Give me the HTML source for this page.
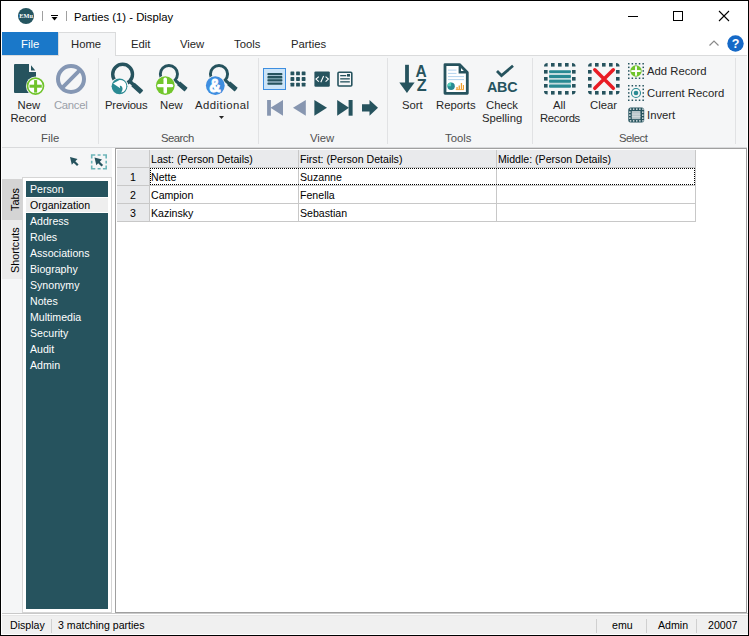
<!DOCTYPE html>
<html><head><meta charset="utf-8">
<style>
*{margin:0;padding:0;box-sizing:border-box}
html,body{width:749px;height:636px;overflow:hidden;background:#fff}
body{position:relative;font-family:"Liberation Sans",sans-serif;color:#1e1e1e}
.a{position:absolute}
.t{position:absolute;white-space:nowrap;line-height:1}
.rb{font-size:11.3px;color:#262626}
.gl{font-size:11.3px;color:#505050}
.tb{font-size:10.6px;color:#000}
svg{position:absolute;overflow:visible}
</style></head><body>
<!-- window border -->
<div class="a" style="left:0;top:0;width:749px;height:636px;border:1px solid #000;z-index:50;pointer-events:none"></div>

<!-- title bar -->
<svg style="left:18px;top:8px" width="16" height="16" viewBox="0 0 16 16"><circle cx="8" cy="8" r="8" fill="#255560"/><text x="1.3" y="10.4" font-family="Liberation Serif" font-size="7" font-weight="bold" fill="#fff" textLength="13.6" lengthAdjust="spacingAndGlyphs">EMu</text></svg>
<div class="a" style="left:42px;top:11px;width:1px;height:10px;background:#a0a0a0"></div>
<div class="a" style="left:51px;top:15px;width:7px;height:1px;background:#000"></div>
<svg style="left:51px;top:17px" width="7" height="4"><path d="M0.5 0 L6.5 0 L3.5 3.5 Z" fill="#000"/></svg>
<div class="a" style="left:66px;top:11px;width:1px;height:10px;background:#a0a0a0"></div>
<div class="t rb" style="left:74px;top:12px;color:#000">Parties (1) - Display</div>
<!-- window controls -->
<div class="a" style="left:628px;top:16px;width:10px;height:1px;background:#000"></div>
<div class="a" style="left:673px;top:11px;width:10px;height:10px;border:1px solid #000"></div>
<svg style="left:719px;top:11px" width="10" height="10"><path d="M0 0 L10 10 M10 0 L0 10" stroke="#000" stroke-width="1.1"/></svg>

<!-- tab row -->
<div class="a" style="left:2px;top:55px;width:745px;height:1px;background:#dadbdc"></div>
<div class="a" style="left:2px;top:32px;width:56px;height:23px;background:#1a78c9"></div>
<div class="t rb" style="left:21px;top:39px;color:#fff">File</div>
<div class="a" style="left:58px;top:32px;width:58px;height:24px;background:#f5f6f7;border:1px solid #dadbdc;border-bottom:none"></div>
<div class="t rb" style="left:71px;top:39px">Home</div>
<div class="t rb" style="left:131px;top:39px">Edit</div>
<div class="t rb" style="left:180px;top:39px">View</div>
<div class="t rb" style="left:234px;top:39px">Tools</div>
<div class="t rb" style="left:291px;top:39px">Parties</div>
<svg style="left:709px;top:40px" width="10" height="6"><path d="M0.5 5.5 L5 1 L9.5 5.5" fill="none" stroke="#8a8a8a" stroke-width="1.2"/></svg>
<svg style="left:727px;top:35px" width="17" height="17" viewBox="0 0 17 17"><circle cx="8.5" cy="8.5" r="8.2" fill="#1569c7"/><text x="8.5" y="13.2" font-family="Liberation Sans" font-weight="bold" font-size="12.5" fill="#fff" text-anchor="middle">?</text></svg>

<!-- ribbon -->
<div class="a" style="left:2px;top:56px;width:745px;height:91px;background:#f5f6f7"></div>
<div class="a" style="left:2px;top:147px;width:745px;height:1px;background:#d9dadc"></div>


<!-- group separators -->
<div class="a" style="left:98px;top:58px;width:1px;height:86px;background:#e1e2e4"></div>
<div class="a" style="left:258px;top:58px;width:1px;height:86px;background:#e1e2e4"></div>
<div class="a" style="left:387px;top:58px;width:1px;height:86px;background:#e1e2e4"></div>
<div class="a" style="left:532px;top:58px;width:1px;height:86px;background:#e1e2e4"></div>
<div class="a" style="left:735px;top:58px;width:1px;height:86px;background:#e1e2e4"></div>

<!-- File group -->
<svg style="left:0;top:0" width="1" height="1">
 <path d="M15 64 L29 64 L29 72 L36 72 L36 92 Q36 93 35 93 L15 93 Q14 93 14 92 L14 65 Q14 64 15 64 Z" fill="#26535e"/>
 <path d="M31 65.3 L31 70.4 L35.3 70.4 Z" fill="#26535e"/>
 <circle cx="35.5" cy="86.1" r="9.6" fill="#f5f6f7"/>
 <circle cx="35.5" cy="86.1" r="8" fill="#fff" stroke="#70c42c" stroke-width="1.7"/>
 <rect x="29.5" y="84.7" width="12.3" height="3" fill="#70c42c"/>
 <rect x="34.1" y="80.1" width="3" height="12.5" fill="#70c42c"/>
 <circle cx="71" cy="79" r="13" fill="none" stroke="#8597b4" stroke-width="4"/>
 <path d="M80.3 69.7 L61.7 88.3" stroke="#8597b4" stroke-width="3.8"/>
</svg>
<div class="t rb" style="left:17.5px;top:100px">New</div>
<div class="t rb" style="left:10.5px;top:113px;letter-spacing:-0.15px">Record</div>
<div class="t rb" style="left:54px;top:100px;color:#9aa0a8;letter-spacing:-0.3px">Cancel</div>
<div class="t gl" style="left:41px;top:133px">File</div>

<!-- Search group -->
<svg style="left:0;top:0" width="1" height="1">
 <circle cx="122.6" cy="74.2" r="9.9" fill="none" stroke="#26535e" stroke-width="3.4"/>
 <path d="M129.5 81 L141.5 92.2" stroke="#26535e" stroke-width="3.6"/>
 <path d="M133 84.5 L141.5 92.2" stroke="#26535e" stroke-width="5"/>
 <circle cx="119.5" cy="86.3" r="8.9" fill="#f5f6f7"/>
 <circle cx="119.5" cy="86.3" r="7.9" fill="#2a8a93"/>
 <path d="M113.1 83.4 L119.5 79.9 A6.4 6.4 0 0 1 121 92.6 Q123.3 89.5 122.2 87.2 Q121.2 85.5 119.8 85.8 L120.2 88.3 Z" fill="#fff"/>
 <circle cx="168.9" cy="74.1" r="8.6" fill="none" stroke="#26535e" stroke-width="2.9"/>
 <path d="M174.5 79.8 L186 89.6" stroke="#26535e" stroke-width="3.2"/>
 <path d="M178.6 83.2 L186 89.6" stroke="#26535e" stroke-width="4.8"/>
 <circle cx="165.3" cy="85.6" r="10.2" fill="#f5f6f7"/>
 <circle cx="165.3" cy="85.6" r="9.4" fill="#72c62c"/>
 <rect x="157.1" y="84" width="16.2" height="3.3" rx="1.6" fill="#fff"/>
 <rect x="163.5" y="77.6" width="3.5" height="15.9" rx="1.6" fill="#fff"/>
 <circle cx="219" cy="74.1" r="8.6" fill="none" stroke="#26535e" stroke-width="2.9"/>
 <path d="M224.6 79.8 L236.1 89.6" stroke="#26535e" stroke-width="3.2"/>
 <path d="M228.7 83.2 L236.1 89.6" stroke="#26535e" stroke-width="4.8"/>
 <circle cx="215.3" cy="85.6" r="10.2" fill="#f5f6f7"/>
 <circle cx="215.3" cy="85.6" r="9.4" fill="#3f8ee0"/>
 <text x="209.3" y="91.8" font-family="Liberation Sans" font-weight="bold" font-size="18.5" fill="#fff" stroke="#fff" stroke-width="1" textLength="11.4" lengthAdjust="spacingAndGlyphs">&amp;</text>
 <path d="M219 116 L224 116 L221.5 119 Z" fill="#262626"/>
</svg>
<div class="t rb" style="left:105px;top:100px;letter-spacing:-0.2px">Previous</div>
<div class="t rb" style="left:160px;top:100px">New</div>
<div class="t rb" style="left:195px;top:100px;letter-spacing:0.5px">Additional</div>
<div class="t gl" style="left:161px;top:133px;letter-spacing:-0.5px">Search</div>

<!-- View group -->
<div class="a" style="left:263px;top:68px;width:23px;height:22px;background:#cce4f7;border:1px solid #3d8ee0"></div>
<svg style="left:0;top:0" width="1" height="1">
 <rect x="267.4" y="72.9" width="15" height="2.3" rx="0.8" fill="#26535e"/>
 <rect x="267.4" y="76.1" width="15" height="2.3" rx="0.8" fill="#26535e"/>
 <rect x="267.4" y="78.4" width="15" height="1" fill="#6c9aa3"/>
 <rect x="267.4" y="79.3" width="15" height="2.3" rx="0.8" fill="#26535e"/>
 <rect x="267.4" y="82.5" width="15" height="2.3" rx="0.8" fill="#26535e"/>
 <g fill="#26535e"><rect x="290.5" y="71.5" width="3.8" height="3.8" rx="0.6"/><rect x="296.1" y="71.5" width="3.8" height="3.8" rx="0.6"/><rect x="301.7" y="71.5" width="3.8" height="3.8" rx="0.6"/><rect x="290.5" y="77.1" width="3.8" height="3.8" rx="0.6"/><rect x="296.1" y="77.1" width="3.8" height="3.8" rx="0.6"/><rect x="301.7" y="77.1" width="3.8" height="3.8" rx="0.6"/><rect x="290.5" y="82.7" width="3.8" height="3.8" rx="0.6"/><rect x="296.1" y="82.7" width="3.8" height="3.8" rx="0.6"/><rect x="301.7" y="82.7" width="3.8" height="3.8" rx="0.6"/></g>
 <rect x="314.4" y="71.4" width="15.4" height="15.4" rx="1.2" fill="#26535e"/>
 <path d="M318.8 76.6 L316 79.1 L318.8 81.6 M325.6 76.6 L328.4 79.1 L325.6 81.6 M323.6 76 L320.8 82.2" fill="none" stroke="#fff" stroke-width="1.1"/>
 <rect x="338" y="72.2" width="13.8" height="13.8" rx="1" fill="none" stroke="#26535e" stroke-width="1.6"/>
 <rect x="340.2" y="75" width="6" height="1.3" fill="#26535e"/>
 <rect x="340.2" y="78.2" width="9.6" height="1.3" fill="#26535e"/>
 <rect x="340.2" y="81.2" width="9.6" height="1.3" fill="#26535e"/>
 <rect x="347" y="74" width="3" height="2.6" fill="#26535e"/>
 <rect x="267.1" y="100" width="3.8" height="15.7" fill="#8796b0"/>
 <path d="M283 100 L283 115.7 L270.5 107.85 Z" fill="#8796b0"/>
 <path d="M305.8 100 L305.8 115.7 L293 107.85 Z" fill="#8796b0"/>
 <path d="M314.4 100 L314.4 115.7 L327 107.85 Z" fill="#26535e"/>
 <path d="M337.2 100 L337.2 115.7 L349 107.85 Z" fill="#26535e"/>
 <rect x="348.6" y="100" width="4" height="15.7" fill="#26535e"/>
 <path d="M362 104.3 L369.5 104.3 L369.5 100 L378 107.85 L369.5 115.7 L369.5 111.4 L362 111.4 Z" fill="#26535e"/>
</svg>
<div class="t gl" style="left:310px;top:133px">View</div>

<!-- Tools group -->
<svg style="left:0;top:0" width="1" height="1">
 <rect x="405.1" y="64.8" width="3.8" height="18.5" fill="#26535e"/>
 <path d="M399.3 82.4 L414.6 82.4 L406.95 93.1 Z" fill="#26535e"/>
 <text x="415.6" y="76.6" font-family="Liberation Sans" font-weight="bold" font-size="16.6" fill="#26535e" textLength="11.2" lengthAdjust="spacingAndGlyphs">A</text>
 <text x="416.7" y="91" font-family="Liberation Sans" font-weight="bold" font-size="16.6" fill="#26535e" textLength="9.9" lengthAdjust="spacingAndGlyphs">Z</text>
 <path d="M445 64.6 L459.5 64.6 L467.3 72.4 L467.3 93.3 L445 93.3 Z" fill="#fff" stroke="#26535e" stroke-width="2.8" stroke-linejoin="round"/>
 <path d="M459.8 64.6 L459.8 72.2 L467.3 72.2" fill="none" stroke="#26535e" stroke-width="2.4"/>
 <rect x="448" y="69.6" width="8.5" height="1" fill="#b3d3ee"/>
 <rect x="448" y="72.9" width="8.5" height="1" fill="#b3d3ee"/>
 <rect x="448" y="76.1" width="16" height="1" fill="#b3d3ee"/>
 <rect x="448" y="79.1" width="16" height="1" fill="#b3d3ee"/>
 <circle cx="451.1" cy="86.2" r="3.7" fill="#2a8a93"/>
 <path d="M451.1 86.2 L451.1 82.5 A3.7 3.7 0 0 0 447.4 86.2 Z" fill="#52d0b8"/>
 <rect x="456.4" y="87" width="1.3" height="2.4" fill="#f0a030"/>
 <rect x="458.6" y="85.5" width="1.3" height="3.9" fill="#f0a030"/>
 <rect x="460.8" y="83" width="1.3" height="6.4" fill="#f0a030"/>
 <rect x="462.9" y="85" width="1.1" height="4.4" fill="#f0a030"/>
 <rect x="455.8" y="89.2" width="8.2" height="0.9" fill="#f0a030"/>
 <path d="M497 71 L501.5 75.5 L513 65.8" fill="none" stroke="#26535e" stroke-width="2.8"/>
 <text x="502.2" y="92.3" font-family="Liberation Sans" font-weight="bold" font-size="14.3" fill="#26535e" text-anchor="middle" letter-spacing="-0.2">ABC</text>
</svg>
<div class="t rb" style="left:402px;top:100px">Sort</div>
<div class="t rb" style="left:436px;top:100px">Reports</div>
<div class="t rb" style="left:486px;top:100px">Check</div>
<div class="t rb" style="left:482px;top:113px">Spelling</div>
<div class="t gl" style="left:445px;top:133px">Tools</div>

<!-- Select group -->
<svg style="left:0;top:0" width="1" height="1">
 <g fill="#26535e"><rect x="551" y="63" width="3.6" height="3.6"/><rect x="551" y="91" width="3.6" height="3.6"/><rect x="558" y="63" width="3.6" height="3.6"/><rect x="558" y="91" width="3.6" height="3.6"/><rect x="565" y="63" width="3.6" height="3.6"/><rect x="565" y="91" width="3.6" height="3.6"/><rect x="544" y="70" width="3.6" height="3.6"/><rect x="572" y="70" width="3.6" height="3.6"/><rect x="544" y="77" width="3.6" height="3.6"/><rect x="572" y="77" width="3.6" height="3.6"/><rect x="544" y="84" width="3.6" height="3.6"/><rect x="572" y="84" width="3.6" height="3.6"/><path d="M544 66.6 Q544 63 547.6 63 L547.6 66.6 Z"/><path d="M572 63 Q575.6 63 575.6 66.6 L572 66.6 Z"/><path d="M544 91 L547.6 91 L547.6 94.6 Q544 94.6 544 91 Z"/><path d="M572 91 L575.6 91 Q575.6 94.6 572 94.6 Z"/></g>
 <rect x="549" y="73" width="22" height="11.5" fill="#c5dcde"/>
 <rect x="549" y="70.2" width="22" height="2.9" rx="1" fill="#2a8a93"/>
 <rect x="549" y="75" width="22" height="2.9" rx="1" fill="#2a8a93"/>
 <rect x="549" y="79.7" width="22" height="3" rx="1" fill="#2a8a93"/>
 <rect x="549" y="84.6" width="22" height="3.2" rx="1" fill="#2a8a93"/>
 <g fill="#26535e"><rect x="595" y="63" width="3.6" height="3.6"/><rect x="595" y="91" width="3.6" height="3.6"/><rect x="602" y="63" width="3.6" height="3.6"/><rect x="602" y="91" width="3.6" height="3.6"/><rect x="609" y="63" width="3.6" height="3.6"/><rect x="609" y="91" width="3.6" height="3.6"/><rect x="588" y="70" width="3.6" height="3.6"/><rect x="616" y="70" width="3.6" height="3.6"/><rect x="588" y="77" width="3.6" height="3.6"/><rect x="616" y="77" width="3.6" height="3.6"/><rect x="588" y="84" width="3.6" height="3.6"/><rect x="616" y="84" width="3.6" height="3.6"/><path d="M588 66.6 Q588 63 591.6 63 L591.6 66.6 Z"/><path d="M616 63 Q619.6 63 619.6 66.6 L616 66.6 Z"/><path d="M588 91 L591.6 91 L591.6 94.6 Q588 94.6 588 91 Z"/><path d="M616 91 L619.6 91 Q619.6 94.6 616 94.6 Z"/></g>
 <path d="M594.8 69.8 L613.3 88.3 M613.3 69.8 L594.8 88.3" stroke="#e91c24" stroke-width="3.5" stroke-linecap="round"/>
 <g fill="#26535e"><rect x="628.0" y="63" width="1.5" height="1.5"/><rect x="628.0" y="77.5" width="1.5" height="1.5"/><rect x="631.6" y="63" width="1.5" height="1.5"/><rect x="631.6" y="77.5" width="1.5" height="1.5"/><rect x="635.2" y="63" width="1.5" height="1.5"/><rect x="635.2" y="77.5" width="1.5" height="1.5"/><rect x="638.8" y="63" width="1.5" height="1.5"/><rect x="638.8" y="77.5" width="1.5" height="1.5"/><rect x="642.4" y="63" width="1.5" height="1.5"/><rect x="642.4" y="77.5" width="1.5" height="1.5"/><rect x="628" y="66.6" width="1.5" height="1.5"/><rect x="642.5" y="66.6" width="1.5" height="1.5"/><rect x="628" y="70.2" width="1.5" height="1.5"/><rect x="642.5" y="70.2" width="1.5" height="1.5"/><rect x="628" y="73.8" width="1.5" height="1.5"/><rect x="642.5" y="73.8" width="1.5" height="1.5"/></g>
 <circle cx="636" cy="71" r="5.7" fill="#70c42c"/>
 <rect x="631.3" y="70.1" width="9.4" height="1.9" fill="#fff"/>
 <rect x="635.05" y="66.3" width="1.9" height="9.4" fill="#fff"/>
 <g fill="#26535e"><rect x="628.0" y="85" width="1.5" height="1.5"/><rect x="628.0" y="99.5" width="1.5" height="1.5"/><rect x="631.6" y="85" width="1.5" height="1.5"/><rect x="631.6" y="99.5" width="1.5" height="1.5"/><rect x="635.2" y="85" width="1.5" height="1.5"/><rect x="635.2" y="99.5" width="1.5" height="1.5"/><rect x="638.8" y="85" width="1.5" height="1.5"/><rect x="638.8" y="99.5" width="1.5" height="1.5"/><rect x="642.4" y="85" width="1.5" height="1.5"/><rect x="642.4" y="99.5" width="1.5" height="1.5"/><rect x="628" y="88.6" width="1.5" height="1.5"/><rect x="642.5" y="88.6" width="1.5" height="1.5"/><rect x="628" y="92.2" width="1.5" height="1.5"/><rect x="642.5" y="92.2" width="1.5" height="1.5"/><rect x="628" y="95.8" width="1.5" height="1.5"/><rect x="642.5" y="95.8" width="1.5" height="1.5"/></g>
 <circle cx="636" cy="93" r="4.5" fill="none" stroke="#2a8a93" stroke-width="1.1"/>
 <circle cx="636" cy="93" r="2.3" fill="#2a8a93"/>
 <rect x="628.3" y="107.4" width="15.9" height="15.2" rx="2.5" fill="#26535e"/>
 <rect x="631.8" y="111" width="8.6" height="8.2" fill="#b6c4c8"/>
 <rect x="631.8" y="113.6" width="8.6" height="0.9" fill="#d5dde0"/><rect x="631.8" y="116.2" width="8.6" height="0.9" fill="#d5dde0"/>
 <g fill="#d8e0e2"><rect x="629.8" y="108.4" width="1.5" height="1.5"/><rect x="629.8" y="120.1" width="1.5" height="1.5"/><rect x="632.9" y="108.4" width="1.5" height="1.5"/><rect x="632.9" y="120.1" width="1.5" height="1.5"/><rect x="636.0" y="108.4" width="1.5" height="1.5"/><rect x="636.0" y="120.1" width="1.5" height="1.5"/><rect x="639.1" y="108.4" width="1.5" height="1.5"/><rect x="639.1" y="120.1" width="1.5" height="1.5"/><rect x="642.2" y="108.4" width="1.5" height="1.5"/><rect x="642.2" y="120.1" width="1.5" height="1.5"/><rect x="629.1" y="111.4" width="1.5" height="1.5"/><rect x="642" y="111.4" width="1.5" height="1.5"/><rect x="629.1" y="114.4" width="1.5" height="1.5"/><rect x="642" y="114.4" width="1.5" height="1.5"/><rect x="629.1" y="117.4" width="1.5" height="1.5"/><rect x="642" y="117.4" width="1.5" height="1.5"/></g>
</svg>
<div class="t rb" style="left:553px;top:100px">All</div>
<div class="t rb" style="left:540px;top:113px;letter-spacing:-0.3px">Records</div>
<div class="t rb" style="left:590px;top:100px">Clear</div>
<div class="t rb" style="left:647px;top:66px">Add Record</div>
<div class="t rb" style="left:647px;top:88px">Current Record</div>
<div class="t rb" style="left:647px;top:110px">Invert</div>
<div class="t gl" style="left:619px;top:133px;letter-spacing:-0.5px">Select</div>


<!-- main area -->
<div class="a" style="left:2px;top:148px;width:745px;height:465px;background:#f5f6f7"></div>
<!-- sidebar tools -->
<svg style="left:0;top:0" width="1" height="1">
 <path d="M70 157 L77.5 159 L75.3 161.2 L78.6 164.5 L77 166.1 L73.7 162.8 L71.8 164.7 Z" fill="#26535e"/>
 <path d="M91.7 158.6 L91.7 155 L95.3 155 M97.6 155 L100.6 155 M102.9 155 L106.2 155 L106.2 158.6 M106.2 160.8 L106.2 163.6 M106.2 165.6 L106.2 168.8 L102.9 168.8 M100.6 168.8 L97.6 168.8 M95.3 168.8 L91.7 168.8 L91.7 165.6 M91.7 163.6 L91.7 160.8" fill="none" stroke="#6db5b9" stroke-width="1.6"/>
 <path d="M94.5 157.5 L102 159.5 L99.8 161.7 L103.1 165 L101.5 166.6 L98.2 163.3 L96.3 165.2 Z" fill="#26535e"/>
</svg>
<!-- vertical tabs -->
<div class="a" style="left:2px;top:179px;width:20px;height:41px;background:#d4d4d4"></div>
<div class="a" style="left:2px;top:220px;width:20px;height:59px;background:#ebebeb"></div>
<div class="t" style="left:10px;top:211px;font-size:10.8px;color:#000;transform-origin:0 0;transform:rotate(-90deg)">Tabs</div>
<div class="t" style="left:10px;top:273px;font-size:10.8px;color:#000;transform-origin:0 0;transform:rotate(-90deg)">Shortcuts</div>
<!-- list panel -->
<div class="a" style="left:22px;top:177px;width:90px;height:436px;background:#fff;border:1px solid #d5d5d5"></div>
<div class="a" style="left:26px;top:181px;width:82px;height:428px;background:#26535e"></div>
<div class="a" style="left:26px;top:197px;width:82px;height:16px;background:#fff"></div>
<div class="a" style="left:26px;top:198px;width:82px;height:14px;background:#eeeeee"></div>
<div class="a" style="left:112px;top:148px;width:3px;height:465px;background:#fff"></div>
<div class="t tb" style="left:30px;top:184px;color:#fff">Person</div>
<div class="t tb" style="left:30px;top:200px">Organization</div>
<div class="t tb" style="left:30px;top:216px;color:#fff">Address</div>
<div class="t tb" style="left:30px;top:232px;color:#fff">Roles</div>
<div class="t tb" style="left:30px;top:248px;color:#fff">Associations</div>
<div class="t tb" style="left:30px;top:264px;color:#fff">Biography</div>
<div class="t tb" style="left:30px;top:280px;color:#fff">Synonymy</div>
<div class="t tb" style="left:30px;top:296px;color:#fff">Notes</div>
<div class="t tb" style="left:30px;top:312px;color:#fff">Multimedia</div>
<div class="t tb" style="left:30px;top:328px;color:#fff">Security</div>
<div class="t tb" style="left:30px;top:344px;color:#fff">Audit</div>
<div class="t tb" style="left:30px;top:360px;color:#fff">Admin</div>

<!-- content panel -->
<div class="a" style="left:115px;top:148px;width:632px;height:465px;background:#fff;border-left:1px solid #a0a0a0;border-top:1px solid #a0a0a0;border-bottom:1px solid #a0a0a0;border-right:1px solid #a0a0a0"></div>
<!-- grid -->
<div class="a" style="left:117px;top:150px;width:579px;height:17px;background:#e9eaec"></div>
<div class="a" style="left:117px;top:167px;width:32px;height:54px;background:#e9eaec"></div>
<svg style="left:0;top:0" width="1" height="1">
 <g fill="#c8c8c8">
 <rect x="117" y="167" width="579" height="1"/>
 <rect x="117" y="185" width="579" height="1"/>
 <rect x="117" y="203" width="579" height="1"/>
 <rect x="117" y="221" width="579" height="1"/>
 <rect x="149" y="150" width="1" height="72"/>
 <rect x="298" y="150" width="1" height="72"/>
 <rect x="496" y="150" width="1" height="72"/>
 <rect x="695" y="150" width="1" height="72"/>
 </g>
</svg>
<div class="a" style="left:150px;top:168px;width:545px;height:1px;background:repeating-linear-gradient(90deg,#000 0 1px,transparent 1px 2px)"></div>
<div class="a" style="left:150px;top:184px;width:545px;height:1px;background:repeating-linear-gradient(90deg,#000 0 1px,transparent 1px 2px)"></div>
<div class="a" style="left:150px;top:168px;width:1px;height:17px;background:repeating-linear-gradient(180deg,#000 0 1px,transparent 1px 2px)"></div>
<div class="a" style="left:694px;top:168px;width:1px;height:17px;background:repeating-linear-gradient(180deg,#000 0 1px,transparent 1px 2px)"></div>
<div class="t tb" style="left:151px;top:154px">Last: (Person Details)</div>
<div class="t tb" style="left:300px;top:154px">First: (Person Details)</div>
<div class="t tb" style="left:498px;top:154px">Middle: (Person Details)</div>
<div class="t tb" style="left:130px;top:172px">1</div>
<div class="t tb" style="left:130px;top:190px">2</div>
<div class="t tb" style="left:130px;top:208px">3</div>
<div class="t tb" style="left:151px;top:172px">Nette</div>
<div class="t tb" style="left:151px;top:190px">Campion</div>
<div class="t tb" style="left:151px;top:208px">Kazinsky</div>
<div class="t tb" style="left:300px;top:172px">Suzanne</div>
<div class="t tb" style="left:300px;top:190px">Fenella</div>
<div class="t tb" style="left:300px;top:208px">Sebastian</div>

<!-- status bar -->
<div class="a" style="left:1px;top:613px;width:747px;height:22px;background:#f0f0f0"></div>
<div class="a" style="left:1px;top:613px;width:747px;height:1px;background:#c9c9c9"></div>
<div class="a" style="left:1px;top:614px;width:747px;height:1px;background:#fff"></div>
<div class="a" style="left:1px;top:615px;width:747px;height:1px;background:#e6e6e6"></div>
<div class="a" style="left:1px;top:634px;width:747px;height:1px;background:#fff"></div>
<div class="a" style="left:1px;top:613px;width:1px;height:22px;background:#fff"></div>
<div class="t tb" style="left:10px;top:620px">Display</div>
<div class="a" style="left:51px;top:619px;width:1px;height:14px;background:#d0d0d0"></div>
<div class="t tb" style="left:58px;top:620px">3 matching parties</div>
<div class="a" style="left:596px;top:619px;width:1px;height:14px;background:#d0d0d0"></div>
<div class="t tb" style="left:612px;top:620px">emu</div>
<div class="a" style="left:646px;top:619px;width:1px;height:14px;background:#d0d0d0"></div>
<div class="t tb" style="left:658px;top:620px">Admin</div>
<div class="a" style="left:696px;top:619px;width:1px;height:14px;background:#d0d0d0"></div>
<div class="t tb" style="left:708px;top:620px">20007</div>

</body></html>
